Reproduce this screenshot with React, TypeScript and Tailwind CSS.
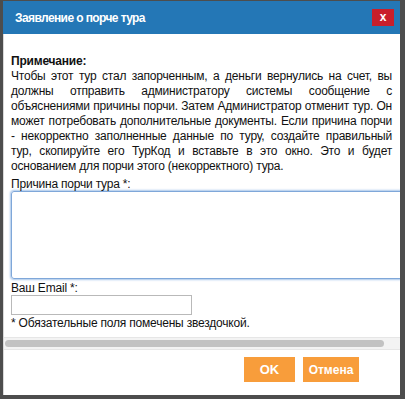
// Spoil-tour request dialog
export default function App() {
  return (
    <div className="w-[405px] h-[399px] bg-[#4d4d4d] pl-[3px] pr-[5px] pt-[1px] pb-[4px] flex flex-col font-['Liberation_Sans',Arial,sans-serif]">
      {/* header */}
      <div className="h-[33px] shrink-0 bg-[#2477b6] flex items-center justify-between pl-[12px] pr-[6px]">
        <span className="text-white font-bold text-[12px] tracking-[-0.6px] leading-none">Заявление о порче тура</span>
        <button className="w-[22px] h-[17px] bg-[#c91f2b] text-white font-bold text-[12px] leading-none flex items-center justify-center pb-[2px]">
          x
        </button>
      </div>

      {/* body */}
      <div className="flex-1 bg-white flex flex-col border-l border-[#d9d9d9]">
        <div className="overflow-hidden pl-[7px] pt-[20px] text-[12px] tracking-[-0.2px] text-[#111]">
          <div className="w-[381px] leading-[15px] text-justify">
            <b>Примечание:</b>
            <br />
            Чтобы этот тур стал запорченным, а деньги вернулись на счет, вы должны отправить администратору системы
            сообщение с объяснениями причины порчи. Затем Администратор отменит тур. Он может потребовать
            дополнительные документы. Если причина порчи - некорректно заполненные данные по туру, создайте правильный
            тур, скопируйте его ТурКод и вставьте в это окно. Это и будет основанием для порчи этого (некорректного)
            тура.
          </div>

          <div className="mt-[3px] leading-[14px]">Причина порчи тура *:</div>
          <textarea className="block w-[400px] h-[88px] border border-[#7fa7d9] rounded-[3px] shadow-[0_0_2px_1px_#a9c6ea] outline-none resize-none" />

          <div className="mt-[3px] leading-[13px]">Ваш Email *:</div>
          <input className="block w-[181px] h-[20px] border border-[#b9b9b9] outline-none" />
          <div className="leading-[14px] pt-[1px]">* Обязательные поля помечены звездочкой.</div>
        </div>

        {/* horizontal scrollbar */}
        <div className="mt-[7px] h-[13px] bg-[#f3f3f3] border-y border-[#e6e6e6] flex items-center pl-[1px]">
          <div className="w-[379px] h-[7px] rounded-full bg-[#c2c2c2]" />
        </div>

        {/* footer */}
        <div className="flex justify-end gap-[8px] pt-[7px] pr-[41px]">
          <button className="w-[51px] h-[25px] bg-[#f89d3b] text-white font-bold text-[13px]">OK</button>
          <button className="w-[56px] h-[25px] bg-[#f89d3b] text-white font-bold text-[12px]">Отмена</button>
        </div>
      </div>
    </div>
  );
}
